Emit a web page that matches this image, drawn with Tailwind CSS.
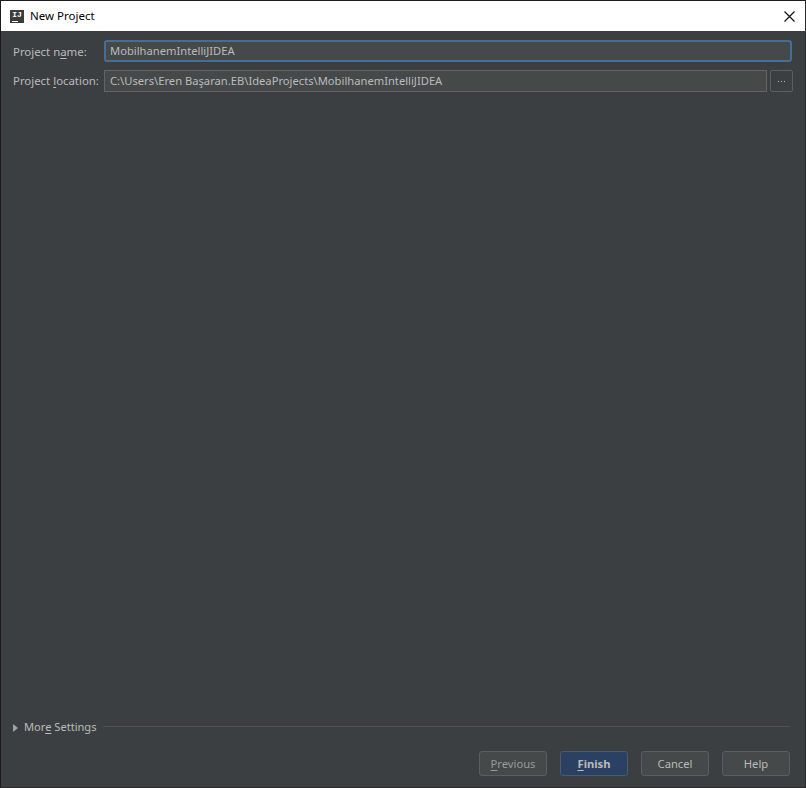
<!DOCTYPE html>
<html lang="en">
<head>
    <meta charset="UTF-8">
    <title>New Project</title>
    <script src="https://cdn.jsdelivr.net/npm/@tailwindcss/browser@4"></script>
</head>
<body class="bg-[#3c3f41]">
    <div class="w-[806px] h-[788px] flex flex-col border border-[#1c1c1c] border-r-[#2b2b2b] border-b-[#2b2b2b] font-['Noto_Sans','Open_Sans',sans-serif] text-[11.2px] text-[#bbbbbb] overflow-hidden">
        <!-- title bar -->
        <div class="h-[30px] shrink-0 bg-white flex items-center pl-[9px] pr-[9px] text-[#000000]">
            <div class="w-[14px] h-[13px] bg-[#3c3c3c] relative text-white text-[8px] leading-[10px] font-bold text-center font-['Liberation_Mono',monospace]">IJ<div class="absolute left-[2px] bottom-[1px] w-[6px] h-px bg-white"></div></div>
            <span class="ml-[6px] text-[11.5px]">New Project</span>
            <svg class="ml-auto mr-[1px]" width="11" height="11" viewBox="0 0 11 11"><path d="M0.5 0.5L10.5 10.5M10.5 0.5L0.5 10.5" stroke="#111" stroke-width="1.2"/></svg>
        </div>

        <!-- form -->
        <div class="flex-1 flex flex-col pt-[9px] pl-[12px] pr-[13px]">
            <div class="flex items-center h-[22px]">
                <label class="w-[91px] shrink-0 text-[11.4px] pt-px">Project n<span class="underline underline-offset-2">a</span>me:</label>
                <div class="h-[22px] flex-1 flex items-center pt-px px-[4px] bg-[#45494a] border-2 border-[#466d94] rounded-[3px]">MobilhanemIntelliJIDEA</div>
            </div>
            <div class="flex items-center h-[22px] mt-[8px]">
                <label class="w-[91px] shrink-0 text-[11.4px]">Project <span class="underline underline-offset-2">l</span>ocation:</label>
                <div class="h-[22px] flex-1 flex items-center pt-px px-[5px] bg-[#45494a] border border-[#646464]">C:\Users\Eren Başaran.EB\IdeaProjects\MobilhanemIntelliJIDEA</div>
                <div class="w-[23px] h-[22px] ml-[3px] mr-[-1px] flex items-center justify-center gap-[2px] border border-[#5e6060] rounded-[2px] bg-[#3c3f41]">
                    <span class="w-px h-px bg-[#bbbbbb]"></span><span class="w-px h-px bg-[#bbbbbb]"></span><span class="w-px h-px bg-[#bbbbbb]"></span>
                </div>
            </div>

            <!-- more settings -->
            <div class="mt-auto flex items-center h-[16px] mb-[15px]">
                <svg width="5" height="8" viewBox="0 0 5 8"><path d="M0 0L5 4L0 8Z" fill="#a0a3a5"/></svg>
                <span class="ml-[6px] text-[11.1px] -translate-y-px">Mor<span class="underline underline-offset-2">e</span> Settings</span>
                <div class="ml-[6px] mr-[2px] flex-1 h-px bg-[#515151] -translate-y-[2px]"></div>
            </div>

            <!-- buttons -->
            <div class="flex justify-end gap-[13px] mb-[11px] pr-[2px]">
                <button class="w-[68px] h-[25px] pt-px bg-[#45494a] border border-[#5b5e5f] rounded-[3px] text-[#999999]"><span class="underline underline-offset-2">P</span>revious</button>
                <button class="w-[68px] h-[25px] pt-px bg-[#2b4163] border border-[#4c5a6a] rounded-[3px] text-[#bbbbbb] font-bold"><span class="underline underline-offset-2">F</span>inish</button>
                <button class="w-[68px] h-[25px] pt-px bg-[#45494a] border border-[#5b5e5f] rounded-[3px]">Cancel</button>
                <button class="w-[68px] h-[25px] pt-px bg-[#45494a] border border-[#5b5e5f] rounded-[3px]">Help</button>
            </div>
        </div>
    </div>
</body>
</html>
